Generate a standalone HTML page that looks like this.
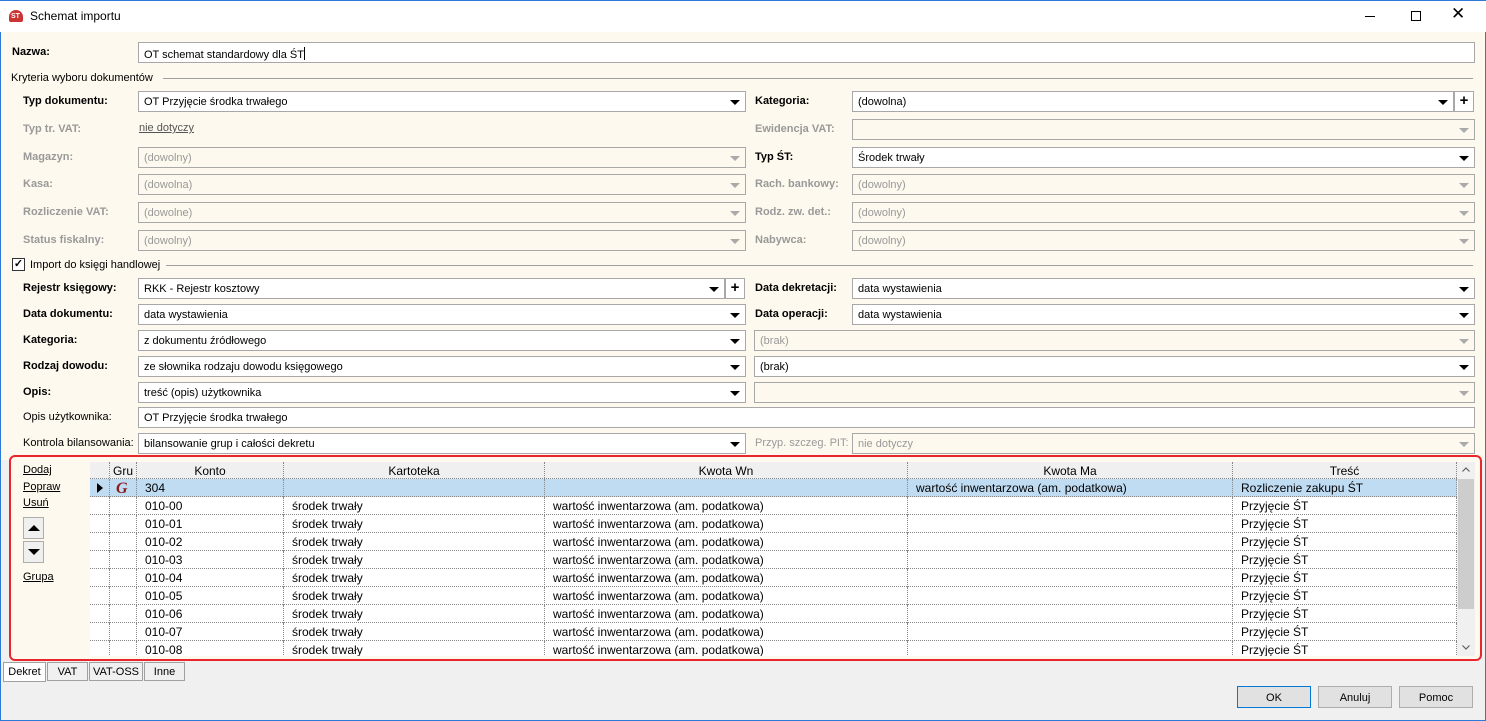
<!DOCTYPE html>
<html><head><meta charset="utf-8"><style>
*{box-sizing:border-box;margin:0;padding:0}
body{width:1486px;height:721px;position:relative;overflow:hidden;background:#f0f0f0;font-family:"Liberation Sans",sans-serif;font-size:11px;color:#000}
.a{position:absolute}
.win{position:absolute;left:0;top:0;width:1486px;height:721px;border:1px solid #2b79d8;border-top:none}
.title{position:absolute;left:0;top:0;width:1486px;height:32px;background:#fff;border-top:1px solid #2b79d8}
.cream{position:absolute;left:1px;top:32px;width:1484px;height:428px;background:#fef9ee}
.lbl{position:absolute;font-size:11px;white-space:nowrap}
.b{font-weight:bold}
.dis{color:#999}
.in{position:absolute;height:21px;border:1px solid #a8a8a8;background:#fff;padding:4px 5px 0;font-size:11px;white-space:nowrap}
.in.d{background:#fef9ee;color:#999}
.in .ar{position:absolute;right:5px;top:8px;width:0;height:0;border-left:5px solid transparent;border-right:5px solid transparent;border-top:5px solid #000}
.in.d .ar{border-top-color:#aaa}
.plus{position:absolute;width:20px;height:21px;border:1px solid #a8a8a8;background:#fff;font-weight:bold;font-size:15px;text-align:center;line-height:18px}
.sep{position:absolute;height:1px;background:#a0a0a0}
.grid{position:absolute;left:90px;top:462px;width:1367px;height:194px;overflow:hidden;background:#fff;font-size:12px}
.row{position:absolute;left:0;width:1367px;height:18px;border-bottom:1px dotted #888}
.c{position:absolute;top:0;height:18px;border-right:1px dotted #888;padding:2px 0 0 8px;white-space:nowrap}
.tab{position:absolute;top:662px;height:19px;border:1px solid #a0a0a0;background:#f0f0f0;font-size:11px;text-align:center;padding-top:3px}
.btn{position:absolute;top:686px;width:74px;height:22px;border:1px solid #adadad;background:#e1e1e1;text-align:center;font-size:11px;padding-top:5px}
</style></head><body>
<div class="win"></div>
<div class="title">
 <div class="a" style="left:9px;top:9px;width:14px;height:12px;border-radius:7px 7px 2px 2px;background:#c33"></div>
 <div class="a" style="left:11px;top:12px;font-size:7px;color:#fff;font-weight:bold">ST</div>
 <div class="a" style="left:30px;top:8px;font-size:12px">Schemat importu</div>
 <div class="a" style="left:1365px;top:15px;width:10px;height:1px;background:#000"></div>
 <div class="a" style="left:1411px;top:10px;width:10px;height:10px;border:1px solid #000"></div>
 <div class="a" style="left:1451px;top:3px;font-size:17px">✕</div>
</div>
<div class="cream"></div>

<div class="lbl b" style="left:12px;top:46px">Nazwa:</div>
<div class="in" style="left:138px;top:42px;width:1337px">OT schemat standardowy dla ŚT<span style="display:inline-block;width:1px;height:13px;background:#000;vertical-align:-2px"></span></div>
<div class="lbl" style="left:11px;top:72px">Kryteria wyboru dokumentów</div>
<div class="sep" style="left:163px;top:78px;width:1310px"></div>

<div class="lbl b" style="left:23px;top:95px">Typ dokumentu:</div>
<div class="in" style="left:138px;top:91px;width:608px">OT Przyjęcie środka trwałego<span class="ar"></span></div>
<div class="lbl dis b" style="left:23px;top:123px">Typ tr. VAT:</div>
<div class="lbl" style="left:139px;top:122px;color:#555;text-decoration:underline">nie dotyczy</div>
<div class="lbl dis b" style="left:23px;top:151px">Magazyn:</div>
<div class="in d" style="left:138px;top:147px;width:608px">(dowolny)<span class="ar"></span></div>
<div class="lbl dis b" style="left:23px;top:178px">Kasa:</div>
<div class="in d" style="left:138px;top:174px;width:608px">(dowolna)<span class="ar"></span></div>
<div class="lbl dis b" style="left:23px;top:206px">Rozliczenie VAT:</div>
<div class="in d" style="left:138px;top:202px;width:608px">(dowolne)<span class="ar"></span></div>
<div class="lbl dis b" style="left:23px;top:234px">Status fiskalny:</div>
<div class="in d" style="left:138px;top:230px;width:608px">(dowolny)<span class="ar"></span></div>

<div class="lbl b" style="left:755px;top:95px">Kategoria:</div>
<div class="in" style="left:852px;top:91px;width:602px">(dowolna)<span class="ar"></span></div>
<div class="plus" style="left:1454px;top:91px">+</div>
<div class="lbl dis b" style="left:755px;top:123px">Ewidencja VAT:</div>
<div class="in d" style="left:852px;top:119px;width:623px"><span class="ar"></span></div>
<div class="lbl b" style="left:755px;top:151px">Typ ŚT:</div>
<div class="in" style="left:852px;top:147px;width:623px">Środek trwały<span class="ar"></span></div>
<div class="lbl dis b" style="left:755px;top:178px">Rach. bankowy:</div>
<div class="in d" style="left:852px;top:174px;width:623px">(dowolny)<span class="ar"></span></div>
<div class="lbl dis b" style="left:755px;top:206px">Rodz. zw. det.:</div>
<div class="in d" style="left:852px;top:202px;width:623px">(dowolny)<span class="ar"></span></div>
<div class="lbl dis b" style="left:755px;top:234px">Nabywca:</div>
<div class="in d" style="left:852px;top:230px;width:623px">(dowolny)<span class="ar"></span></div>

<div class="a" style="left:12px;top:258px;width:13px;height:13px;border:1px solid #333;background:#fff;font-size:11px;line-height:11px;text-align:center;font-weight:bold">✓</div>
<div class="lbl" style="left:30px;top:259px">Import do księgi handlowej</div>
<div class="sep" style="left:166px;top:265px;width:1307px"></div>

<div class="lbl b" style="left:23px;top:282px">Rejestr księgowy:</div>
<div class="in" style="left:138px;top:278px;width:587px">RKK - Rejestr kosztowy<span class="ar"></span></div>
<div class="plus" style="left:725px;top:278px">+</div>
<div class="lbl b" style="left:23px;top:308px">Data dokumentu:</div>
<div class="in" style="left:138px;top:304px;width:608px">data wystawienia<span class="ar"></span></div>
<div class="lbl b" style="left:23px;top:334px">Kategoria:</div>
<div class="in" style="left:138px;top:330px;width:608px">z dokumentu źródłowego<span class="ar"></span></div>
<div class="lbl b" style="left:23px;top:360px">Rodzaj dowodu:</div>
<div class="in" style="left:138px;top:356px;width:608px">ze słownika rodzaju dowodu księgowego<span class="ar"></span></div>
<div class="lbl b" style="left:23px;top:386px">Opis:</div>
<div class="in" style="left:138px;top:382px;width:608px">treść (opis) użytkownika<span class="ar"></span></div>
<div class="lbl" style="left:23px;top:411px">Opis użytkownika:</div>
<div class="in" style="left:138px;top:407px;width:1337px">OT Przyjęcie środka trwałego</div>
<div class="lbl" style="left:23px;top:437px">Kontrola bilansowania:</div>
<div class="in" style="left:138px;top:433px;width:608px">bilansowanie grup i całości dekretu<span class="ar"></span></div>

<div class="lbl b" style="left:755px;top:282px">Data dekretacji:</div>
<div class="in" style="left:852px;top:278px;width:623px">data wystawienia<span class="ar"></span></div>
<div class="lbl b" style="left:755px;top:308px">Data operacji:</div>
<div class="in" style="left:852px;top:304px;width:623px">data wystawienia<span class="ar"></span></div>
<div class="in d" style="left:754px;top:330px;width:721px">(brak)<span class="ar"></span></div>
<div class="in" style="left:754px;top:356px;width:721px">(brak)<span class="ar"></span></div>
<div class="in d" style="left:754px;top:382px;width:721px"><span class="ar"></span></div>
<div class="lbl dis" style="left:755px;top:437px">Przyp. szczeg. PIT:</div>
<div class="in d" style="left:852px;top:433px;width:623px">nie dotyczy<span class="ar"></span></div>

<div class="a" style="left:9px;top:455px;width:1473px;height:206px;border:2px solid #e8262b;border-radius:6px;background:#fef9ee"></div>
<div class="lbl" style="left:23px;top:464px;text-decoration:underline">Dodaj</div>
<div class="lbl" style="left:23px;top:481px;text-decoration:underline">Popraw</div>
<div class="lbl" style="left:23px;top:497px;text-decoration:underline">Usuń</div>
<div class="a" style="left:23px;top:517px;width:21px;height:22px;border:1px solid #adadad;background:#f0f0f0"><div class="a" style="left:4px;top:7px;border-left:6px solid transparent;border-right:6px solid transparent;border-bottom:6px solid #000"></div></div>
<div class="a" style="left:23px;top:541px;width:21px;height:22px;border:1px solid #adadad;background:#f0f0f0"><div class="a" style="left:4px;top:7px;border-left:6px solid transparent;border-right:6px solid transparent;border-top:6px solid #000"></div></div>
<div class="lbl" style="left:23px;top:571px;text-decoration:underline">Grupa</div>

<div class="grid">
 <div class="row" style="top:0;height:17px;background:#f0f0f0">
  <div class="c" style="left:0;width:20px"></div>
  <div class="c" style="left:20px;width:27px;padding-left:3px">Gru</div>
  <div class="c" style="left:47px;width:147px;padding:2px 0 0;text-align:center">Konto</div>
  <div class="c" style="left:194px;width:261px;padding:2px 0 0;text-align:center">Kartoteka</div>
  <div class="c" style="left:455px;width:363px;padding:2px 0 0;text-align:center">Kwota Wn</div>
  <div class="c" style="left:818px;width:325px;padding:2px 0 0;text-align:center">Kwota Ma</div>
  <div class="c" style="left:1143px;width:224px;padding:2px 0 0;text-align:center">Treść</div>
 </div>
 <div class="row" style="top:17px;background:#c0dcf3">
  <div class="c" style="left:0;width:20px;padding:0"><div class="a" style="left:7px;top:4px;border-top:5px solid transparent;border-bottom:5px solid transparent;border-left:6px solid #000"></div></div>
  <div class="c" style="left:20px;width:27px;padding-left:6px;color:#8b1a1a;font-family:'Liberation Serif',serif;font-weight:bold;font-style:italic;font-size:16px;line-height:15px">G</div>
  <div class="c" style="left:47px;width:147px">304</div>
  <div class="c" style="left:194px;width:261px"></div>
  <div class="c" style="left:455px;width:363px"></div>
  <div class="c" style="left:818px;width:325px">wartość inwentarzowa (am. podatkowa)</div>
  <div class="c" style="left:1143px;width:224px">Rozliczenie zakupu ŚT</div>
 </div>
 <div class="row" style="top:35px"><div class="c" style="left:0;width:20px"></div><div class="c" style="left:20px;width:27px"></div><div class="c" style="left:47px;width:147px">010-00</div><div class="c" style="left:194px;width:261px">środek trwały</div><div class="c" style="left:455px;width:363px">wartość inwentarzowa (am. podatkowa)</div><div class="c" style="left:818px;width:325px"></div><div class="c" style="left:1143px;width:224px">Przyjęcie ŚT</div></div>
 <div class="row" style="top:53px"><div class="c" style="left:0;width:20px"></div><div class="c" style="left:20px;width:27px"></div><div class="c" style="left:47px;width:147px">010-01</div><div class="c" style="left:194px;width:261px">środek trwały</div><div class="c" style="left:455px;width:363px">wartość inwentarzowa (am. podatkowa)</div><div class="c" style="left:818px;width:325px"></div><div class="c" style="left:1143px;width:224px">Przyjęcie ŚT</div></div>
 <div class="row" style="top:71px"><div class="c" style="left:0;width:20px"></div><div class="c" style="left:20px;width:27px"></div><div class="c" style="left:47px;width:147px">010-02</div><div class="c" style="left:194px;width:261px">środek trwały</div><div class="c" style="left:455px;width:363px">wartość inwentarzowa (am. podatkowa)</div><div class="c" style="left:818px;width:325px"></div><div class="c" style="left:1143px;width:224px">Przyjęcie ŚT</div></div>
 <div class="row" style="top:89px"><div class="c" style="left:0;width:20px"></div><div class="c" style="left:20px;width:27px"></div><div class="c" style="left:47px;width:147px">010-03</div><div class="c" style="left:194px;width:261px">środek trwały</div><div class="c" style="left:455px;width:363px">wartość inwentarzowa (am. podatkowa)</div><div class="c" style="left:818px;width:325px"></div><div class="c" style="left:1143px;width:224px">Przyjęcie ŚT</div></div>
 <div class="row" style="top:107px"><div class="c" style="left:0;width:20px"></div><div class="c" style="left:20px;width:27px"></div><div class="c" style="left:47px;width:147px">010-04</div><div class="c" style="left:194px;width:261px">środek trwały</div><div class="c" style="left:455px;width:363px">wartość inwentarzowa (am. podatkowa)</div><div class="c" style="left:818px;width:325px"></div><div class="c" style="left:1143px;width:224px">Przyjęcie ŚT</div></div>
 <div class="row" style="top:125px"><div class="c" style="left:0;width:20px"></div><div class="c" style="left:20px;width:27px"></div><div class="c" style="left:47px;width:147px">010-05</div><div class="c" style="left:194px;width:261px">środek trwały</div><div class="c" style="left:455px;width:363px">wartość inwentarzowa (am. podatkowa)</div><div class="c" style="left:818px;width:325px"></div><div class="c" style="left:1143px;width:224px">Przyjęcie ŚT</div></div>
 <div class="row" style="top:143px"><div class="c" style="left:0;width:20px"></div><div class="c" style="left:20px;width:27px"></div><div class="c" style="left:47px;width:147px">010-06</div><div class="c" style="left:194px;width:261px">środek trwały</div><div class="c" style="left:455px;width:363px">wartość inwentarzowa (am. podatkowa)</div><div class="c" style="left:818px;width:325px"></div><div class="c" style="left:1143px;width:224px">Przyjęcie ŚT</div></div>
 <div class="row" style="top:161px"><div class="c" style="left:0;width:20px"></div><div class="c" style="left:20px;width:27px"></div><div class="c" style="left:47px;width:147px">010-07</div><div class="c" style="left:194px;width:261px">środek trwały</div><div class="c" style="left:455px;width:363px">wartość inwentarzowa (am. podatkowa)</div><div class="c" style="left:818px;width:325px"></div><div class="c" style="left:1143px;width:224px">Przyjęcie ŚT</div></div>
 <div class="row" style="top:179px"><div class="c" style="left:0;width:20px"></div><div class="c" style="left:20px;width:27px"></div><div class="c" style="left:47px;width:147px">010-08</div><div class="c" style="left:194px;width:261px">środek trwały</div><div class="c" style="left:455px;width:363px">wartość inwentarzowa (am. podatkowa)</div><div class="c" style="left:818px;width:325px"></div><div class="c" style="left:1143px;width:224px">Przyjęcie ŚT</div></div>
</div>
<div class="a" style="left:1457px;top:462px;width:18px;height:194px;background:#f0f0f0">
 <svg class="a" style="left:5px;top:5px" width="8" height="5"><path d="M0.5 4.5 L4 1 L7.5 4.5" fill="none" stroke="#606060" stroke-width="1.2"/></svg>
 <div class="a" style="left:1px;top:17px;width:16px;height:130px;background:#cdcdcd"></div>
 <svg class="a" style="left:5px;top:183px" width="8" height="5"><path d="M0.5 0.5 L4 4 L7.5 0.5" fill="none" stroke="#606060" stroke-width="1.2"/></svg>
</div>

<div class="tab" style="left:3px;width:43px;background:#fff;height:20px">Dekret</div>
<div class="tab" style="left:47px;width:41px">VAT</div>
<div class="tab" style="left:89px;width:54px">VAT-OSS</div>
<div class="tab" style="left:144px;width:41px">Inne</div>

<div class="btn" style="left:1237px;border-color:#0078d7">OK</div>
<div class="btn" style="left:1318px">Anuluj</div>
<div class="btn" style="left:1399px">Pomoc</div>
</body></html>
